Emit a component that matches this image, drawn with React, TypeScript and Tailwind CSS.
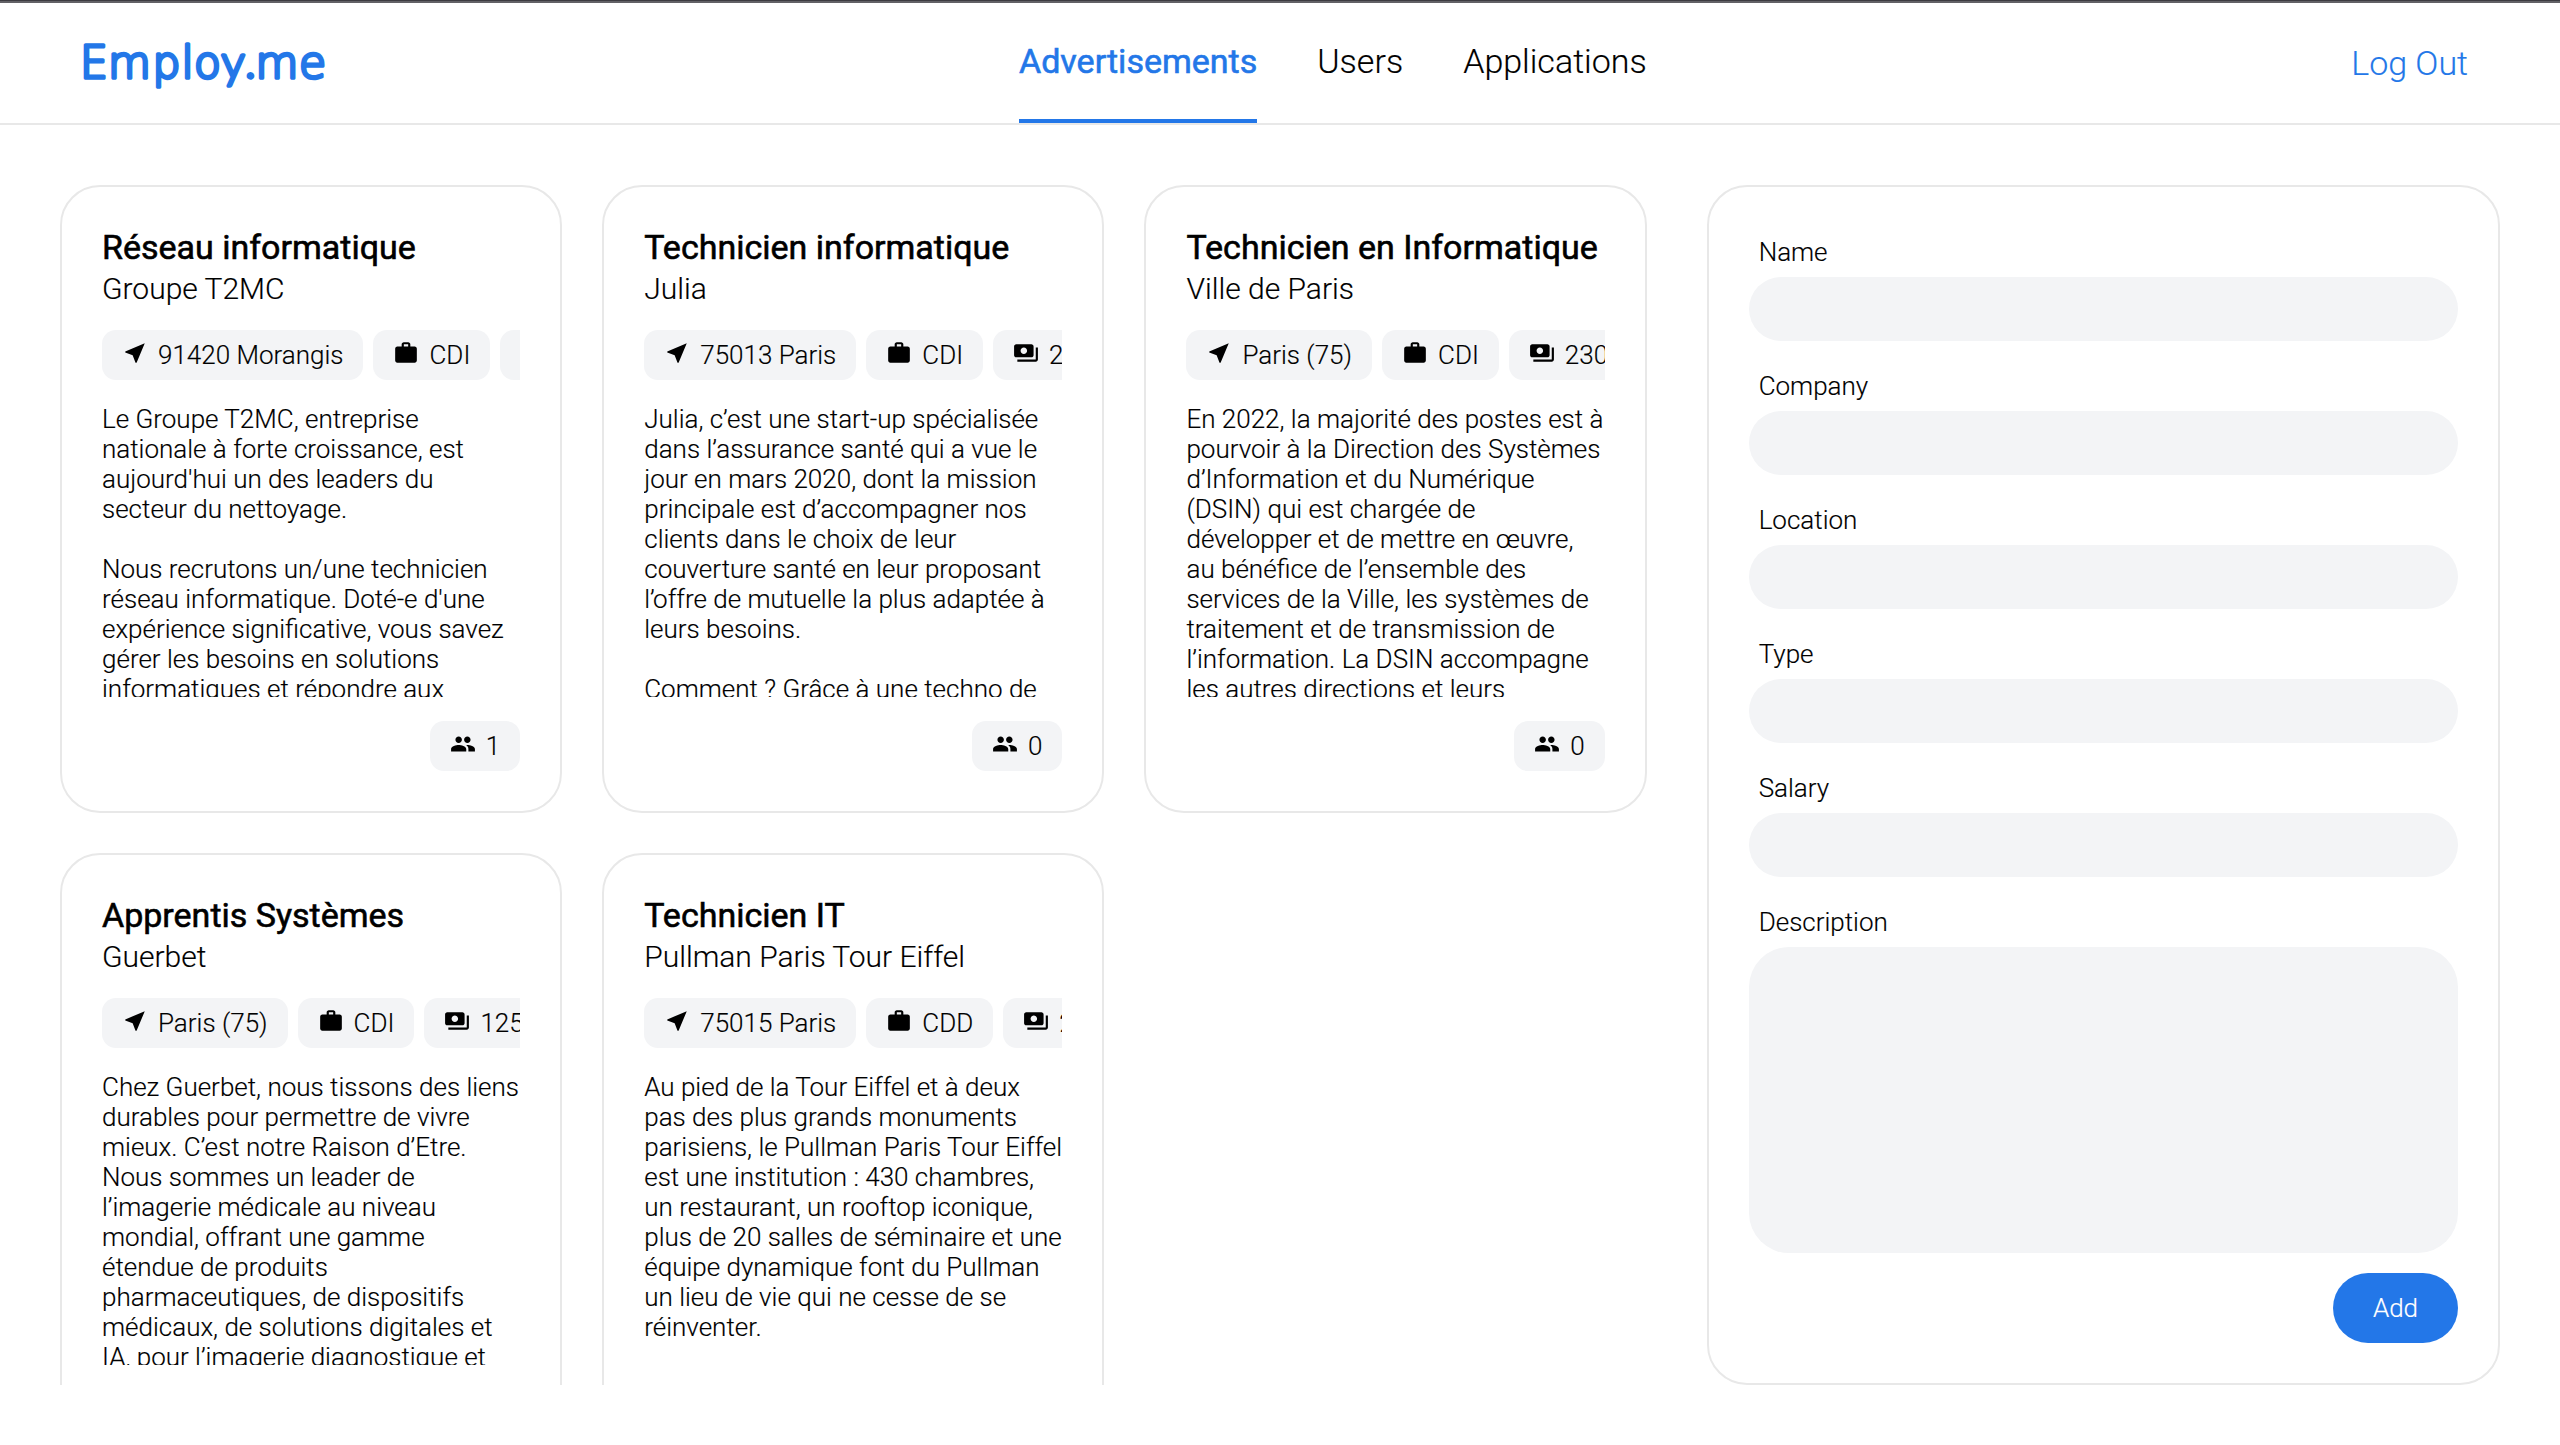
import { MdNearMe, MdWork, MdPayments, MdPeople } from "react-icons/md";
import type { ReactNode } from "react";

type Ad = { title: string; company: string; place: string; type: string; salary: string; text: string; count: number };

const ads: Ad[] = [
  {
    title: "Réseau informatique",
    company: "Groupe T2MC",
    place: "91420 Morangis",
    type: "CDI",
    salary: "2000€",
    count: 1,
    text: "Le Groupe T2MC, entreprise\nnationale à forte croissance, est\naujourd'hui un des leaders du\nsecteur du nettoyage.\n\nNous recrutons un/une technicien\nréseau informatique. Doté-e d'une\nexpérience significative, vous savez\ngérer les besoins en solutions\ninformatiques et répondre aux",
  },
  {
    title: "Technicien informatique",
    company: "Julia",
    place: "75013 Paris",
    type: "CDI",
    salary: "2000€",
    count: 0,
    text: "Julia, c’est une start-up spécialisée\ndans l’assurance santé qui a vue le\njour en mars 2020, dont la mission\nprincipale est d’accompagner nos\nclients dans le choix de leur\ncouverture santé en leur proposant\nl’offre de mutuelle la plus adaptée à\nleurs besoins.\n\nComment ? Grâce à une techno de",
  },
  {
    title: "Technicien en Informatique",
    company: "Ville de Paris",
    place: "Paris (75)",
    type: "CDI",
    salary: "2300€",
    count: 0,
    text: "En 2022, la majorité des postes est à\npourvoir à la Direction des Systèmes\nd’Information et du Numérique\n(DSIN) qui est chargée de\ndévelopper et de mettre en œuvre,\nau bénéfice de l’ensemble des\nservices de la Ville, les systèmes de\ntraitement et de transmission de\nl’information. La DSIN accompagne\nles autres directions et leurs",
  },
  {
    title: "Apprentis Systèmes",
    company: "Guerbet",
    place: "Paris (75)",
    type: "CDI",
    salary: "1250€",
    count: 0,
    text: "Chez Guerbet, nous tissons des liens\ndurables pour permettre de vivre\nmieux. C’est notre Raison d’Etre.\nNous sommes un leader de\nl’imagerie médicale au niveau\nmondial, offrant une gamme\nétendue de produits\npharmaceutiques, de dispositifs\nmédicaux, de solutions digitales et\nIA, pour l’imagerie diagnostique et",
  },
  {
    title: "Technicien IT",
    company: "Pullman Paris Tour Eiffel",
    place: "75015 Paris",
    type: "CDD",
    salary: "2000€",
    count: 0,
    text: "Au pied de la Tour Eiffel et à deux\npas des plus grands monuments\nparisiens, le Pullman Paris Tour Eiffel\nest une institution : 430 chambres,\nun restaurant, un rooftop iconique,\nplus de 20 salles de séminaire et une\néquipe dynamique font du Pullman\nun lieu de vie qui ne cesse de se\nréinventer.",
  },
];

function Chip({ icon, children }: { icon: ReactNode; children: ReactNode }) {
  return (
    <div className="flex h-[50px] shrink-0 items-start gap-[10px] rounded-[14px] bg-[#f3f4f6] px-5 pt-[10px] leading-[30px] whitespace-nowrap">
      <span className="text-[26px]">{icon}</span>
      <span>{children}</span>
    </div>
  );
}

function Card({ ad }: { ad: Ad }) {
  return (
    <article className="flex h-[628px] min-w-0 flex-col rounded-[40px] border-2 border-[#e8e8e8] p-10">
      <h2 className="text-[34px] leading-[40px] font-normal whitespace-nowrap [-webkit-text-stroke:0.6px]">{ad.title}</h2>
      <p className="text-[30px] leading-[43px]">{ad.company}</p>
      <div className="mt-5 flex gap-[10px] overflow-hidden">
        <Chip icon={<MdNearMe />}>{ad.place}</Chip>
        <Chip icon={<MdWork />}>{ad.type}</Chip>
        <Chip icon={<MdPayments />}>{ad.salary}</Chip>
      </div>
      <p className="mt-6 h-[293px] overflow-hidden leading-[30px] whitespace-pre">{ad.text}</p>
      <div className="mt-6 flex justify-end">
        <Chip icon={<MdPeople />}>{ad.count}</Chip>
      </div>
    </article>
  );
}

function Field({ label }: { label: string }) {
  return (
    <label className="mb-[30px] block">
      <span className="block pl-[10px] leading-[30px]">{label}</span>
      <input className="mt-[10px] block h-16 w-full rounded-full bg-[#f3f4f6]" />
    </label>
  );
}

function Logo() {
  return (
    <svg width="360" height="120" className="block text-[#2377e8]">
      <text
        y="75.4"
        fontSize="44"
        fontFamily="DejaVu Sans"
        fontWeight="200"
        fill="currentColor"
        stroke="currentColor"
        strokeWidth="3.4"
        strokeLinejoin="round"
      >
        <tspan x="80 108 152.5 181.5 194">Emplo</tspan>
        <tspan x="221.5 245" fontFamily="Lato" fontWeight="300" fontSize="46">
          y.
        </tspan>
        <tspan x="255.5 299">me</tspan>
      </text>
    </svg>
  );
}

export default function App() {
  return (
    <div className="flex h-[1445px] w-[2560px] flex-col overflow-hidden bg-white font-['Roboto',sans-serif] text-[26px] font-light text-black [-webkit-text-stroke:0.15px]">
      <div className="h-[3px] shrink-0 border-t border-[#3c3b40] bg-[#626166]" />
      <header className="flex h-[122px] shrink-0 border-b-2 border-[#e8e8e8] text-[34px]">
        <div className="w-[1019px]">
          <Logo />
        </div>
        <nav className="flex gap-[60px] leading-[116px]">
          <a className="h-[120px] border-b-4 border-[#2377e8] font-normal text-[#2377e8] [-webkit-text-stroke:0.6px]">Advertisements</a>
          <a>Users</a>
          <a>Applications</a>
        </nav>
        <div className="flex-1 pr-[92px] text-right leading-[120px] text-[#2377e8]">Log Out</div>
      </header>
      <main className="grid h-[1320px] grid-cols-[minmax(0,2fr)_minmax(0,1fr)] gap-x-[60px] p-[60px]">
        <section className="grid min-w-0 auto-rows-[628px] grid-cols-3 gap-10 overflow-hidden">
          {ads.map((ad) => (
            <Card key={ad.title} ad={ad} />
          ))}
        </section>
        <form className="flex min-w-0 flex-col rounded-[40px] border-2 border-[#e8e8e8] p-10 pt-[50px]">
          <Field label="Name" />
          <Field label="Company" />
          <Field label="Location" />
          <Field label="Type" />
          <Field label="Salary" />
          <label className="flex min-h-0 flex-1 flex-col">
            <span className="pl-[10px] leading-[30px]">Description</span>
            <textarea className="mt-[10px] block w-full flex-1 resize-none rounded-[40px] bg-[#f3f4f6]" />
          </label>
          <button type="button" className="mt-5 h-[70px] w-[125px] self-end rounded-full bg-[#2377e8] text-white">
            Add
          </button>
        </form>
      </main>
    </div>
  );
}
